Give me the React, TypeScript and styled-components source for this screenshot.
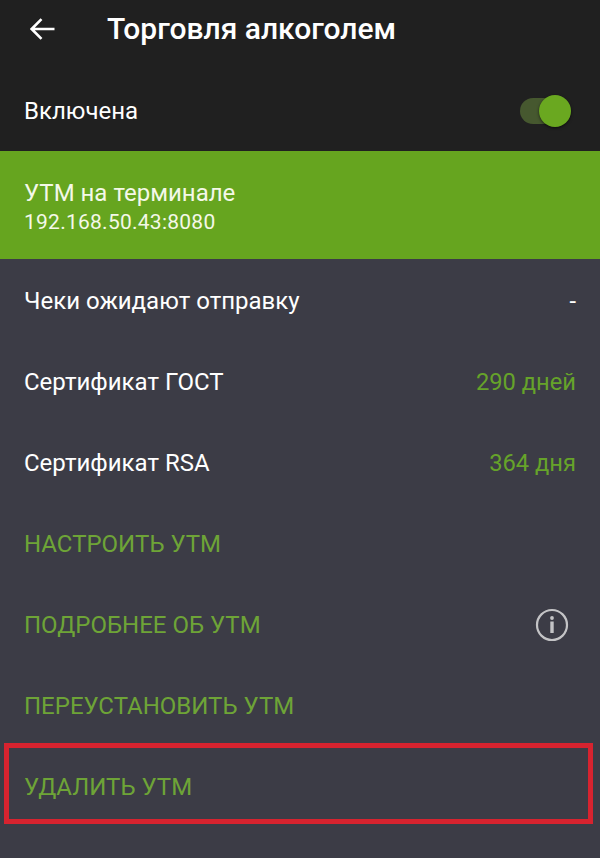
import { createGlobalStyle, styled } from "styled-components";

const Global = createGlobalStyle`
  html, body {
    margin: 0;
    padding: 0;
    background: #3c3c46;
    font-family: Roboto, "Noto Sans", sans-serif;
  }
`;

const Page = styled.div`
  width: 600px;
  height: 858px;
  overflow: hidden;
  background: #3c3c46;
`;

const Header = styled.div`
  height: 151px;
  background: #202020;
  display: flex;
  flex-direction: column;
`;

const TopBar = styled.div`
  height: 58px;
  display: flex;
  align-items: center;
  padding-left: 30px;
  gap: 52px;
`;

const Title = styled.div`
  color: #fff;
  font-size: 30px;
  font-weight: 500;
  margin-bottom: 2px;
`;

const SwitchRow = styled.div`
  flex: 1;
  display: flex;
  align-items: center;
  justify-content: space-between;
  padding: 13px 30px 0 24px;
`;

const SwitchLabel = styled.div`
  color: #fff;
  font-size: 24px;
`;

const Track = styled.div`
  position: relative;
  width: 50px;
  height: 26px;
  border-radius: 13px;
  background: #46582f;
`;

const Thumb = styled.div`
  position: absolute;
  right: -1px;
  top: -3px;
  width: 32px;
  height: 32px;
  border-radius: 50%;
  background: #6aa820;
  box-shadow: 0 1px 3px rgba(0, 0, 0, 0.6);
`;

const Banner = styled.div`
  height: 108px;
  background: #66a51f;
  color: #f4f8e8;
  box-sizing: border-box;
  padding: 28px 24px 0;
`;

const BannerTitle = styled.div`
  font-size: 24px;
  line-height: 28px;
`;

const BannerSub = styled.div`
  font-size: 21px;
  line-height: 30px;
  letter-spacing: 0.25px;
`;

const List = styled.div`
  display: flex;
  flex-direction: column;
  padding-top: 1px;
`;

const Row = styled.div<{ $marked?: boolean }>`
  position: relative;
  height: 81px;
  display: flex;
  align-items: center;
  justify-content: space-between;
  padding: 0 24px;
  &::after {
    content: "";
    display: ${(p) => (p.$marked ? "block" : "none")};
    position: absolute;
    left: 4px;
    right: 7px;
    top: -3px;
    bottom: 3px;
    border: 5px solid #d7232f;
  }
`;

const Label = styled.div`
  color: #fff;
  font-size: 24px;
`;

const Value = styled.div<{ $green?: boolean }>`
  color: ${(p) => (p.$green ? "#66a32a" : "#fff")};
  font-size: 23.7px;
`;

const Action = styled.div`
  color: #6ea437;
  font-size: 24px;
`;

const InfoIcon = () => (
  <svg width="34" height="34" viewBox="0 0 34 34" style={{ marginRight: 7 }}>
    <circle cx="17" cy="17" r="15" fill="none" stroke="#c4c4c6" strokeWidth="2.2" />
    <circle cx="17" cy="10" r="1.9" fill="#c4c4c6" />
    <rect x="15.3" y="13.5" width="3.4" height="11.5" fill="#c4c4c6" />
  </svg>
);

const BackIcon = () => (
  <svg width="25" height="22" viewBox="0 0 25 22">
    <path
      d="M24.5 11H2M11.5 1.2 1.7 11l9.8 9.8"
      fill="none"
      stroke="#fff"
      strokeWidth="2.6"
    />
  </svg>
);

export default function App() {
  return (
    <Page>
      <Global />
      <Header>
        <TopBar>
          <BackIcon />
          <Title>Торговля алкоголем</Title>
        </TopBar>
        <SwitchRow>
          <SwitchLabel>Включена</SwitchLabel>
          <Track>
            <Thumb />
          </Track>
        </SwitchRow>
      </Header>
      <Banner>
        <BannerTitle>УТМ на терминале</BannerTitle>
        <BannerSub>192.168.50.43:8080</BannerSub>
      </Banner>
      <List>
        <Row>
          <Label>Чеки ожидают отправку</Label>
          <Value>-</Value>
        </Row>
        <Row>
          <Label>Сертификат ГОСТ</Label>
          <Value $green>290 дней</Value>
        </Row>
        <Row>
          <Label>Сертификат RSA</Label>
          <Value $green>364 дня</Value>
        </Row>
        <Row>
          <Action>НАСТРОИТЬ УТМ</Action>
        </Row>
        <Row>
          <Action>ПОДРОБНЕЕ ОБ УТМ</Action>
          <InfoIcon />
        </Row>
        <Row>
          <Action>ПЕРЕУСТАНОВИТЬ УТМ</Action>
        </Row>
        <Row $marked>
          <Action>УДАЛИТЬ УТМ</Action>
        </Row>
      </List>
    </Page>
  );
}
